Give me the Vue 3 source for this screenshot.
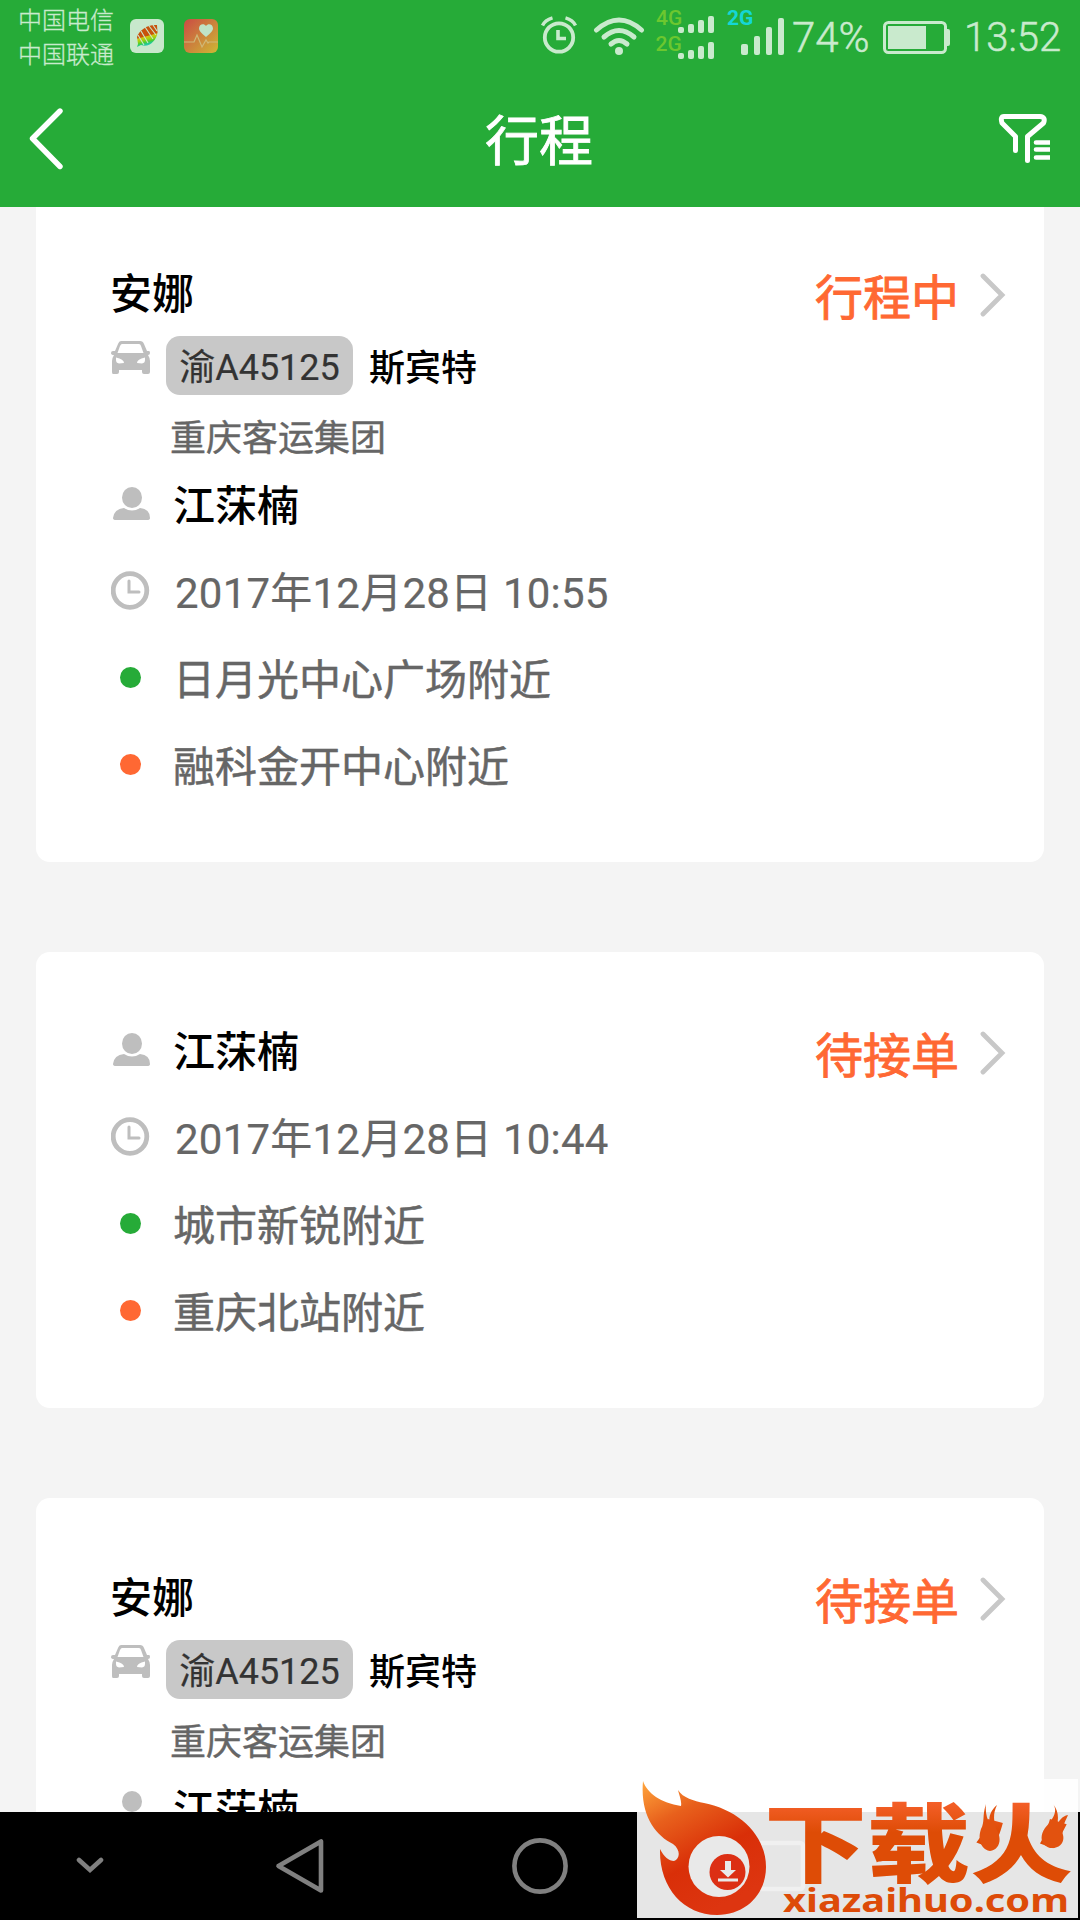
<script setup>
import { ref } from "vue";

const trips = ref([
  {
    id: 1,
    driver: "安娜",
    plate: "渝A45125",
    model: "斯宾特",
    company: "重庆客运集团",
    passenger: "江莯楠",
    time: "2017年12月28日 10:55",
    from: "日月光中心广场附近",
    to: "融科金开中心附近",
    status: "行程中",
  },
  {
    id: 2,
    passenger: "江莯楠",
    time: "2017年12月28日 10:44",
    from: "城市新锐附近",
    to: "重庆北站附近",
    status: "待接单",
  },
  {
    id: 3,
    driver: "安娜",
    plate: "渝A45125",
    model: "斯宾特",
    company: "重庆客运集团",
    passenger: "江莯楠",
    status: "待接单",
  },
]);
</script>

<template>
  <div class="screen">
    <header class="header">
      <div class="status-bar">
        <div class="carriers">
          <span>中国电信</span>
          <span>中国联通</span>
        </div>

        <svg class="app-icon" width="34" height="34" viewBox="0 0 34 34">
          <defs>
            <linearGradient id="leafFill" x1="0.3" y1="0" x2="0.55" y2="1">
              <stop offset="0.5" stop-color="#c8530c" />
              <stop offset="0.54" stop-color="#d2c80f" />
              <stop offset="0.66" stop-color="#9fd013" />
              <stop offset="0.76" stop-color="#4ccf30" />
              <stop offset="0.84" stop-color="#22c98a" />
              <stop offset="1" stop-color="#43c8d8" />
            </linearGradient>
          </defs>
          <rect width="34" height="34" rx="6" fill="#c8e8cc" />
          <path d="M27 6C18 5 9 11 7 18L8 25L7 28L11 26C19 29 26 22 27.500 14Z" fill="url(#leafFill)" />
          <path d="M8 16l6 10M11 12l7 12M15 8l8 12M19 7l7 9M23 6l4 6" stroke="#c8e8cc" stroke-width="1.1" />
        </svg>

        <svg class="app-icon second" width="34" height="34" viewBox="0 0 34 34">
          <defs>
            <linearGradient id="health" x1="0" y1="0" x2="1" y2="1">
              <stop offset="0" stop-color="#cb4b44" />
              <stop offset="1" stop-color="#cdb934" />
            </linearGradient>
          </defs>
          <rect width="34" height="34" rx="6" fill="url(#health)" />
          <path d="M22 18C17 14 15 11.500 15 9.500C15 5 20 4 22 7C24 4 29 5 29 9.500C29 11.500 27 14 22 18Z" fill="#bfe3c6" />
          <path d="M0 23H10L13 16L18 28L22 21L24 24L25 23H34" fill="none" stroke="#d0b878" stroke-width="1.200" />
        </svg>

        <svg class="alarm" width="38" height="38" viewBox="0 0 38 38" fill="none" stroke="#c9eacd">
          <circle cx="19" cy="21.500" r="14.200" stroke-width="3.800" />
          <path d="M18 14V22.500H26" stroke-width="3.600" />
          <path d="M2.500 9.500Q5 4 12.500 1.800M35.500 9.500Q33 4 25.500 1.800" stroke-width="3.400" />
        </svg>

        <svg class="wifi" width="52" height="40" viewBox="0 0 52 40" fill="none" stroke="#c9eacd" stroke-width="5" stroke-linecap="round">
          <path d="M3.500 13Q26-7 48.500 13" />
          <path d="M11 20Q26 7 41 20" />
          <path d="M18 27Q26 20 34 27" />
          <circle cx="26" cy="34" r="4" fill="#c9eacd" stroke="none" />
        </svg>

        <svg class="dual-signal" width="60" height="60" viewBox="0 0 60 60" fill="#c9eacd">
          <text x="0" y="19" class="net-text">4G</text>
          <text x="-0.500" y="45" class="net-text">2G</text>
          <rect x="22" y="21" width="6" height="6" rx="2" />
          <rect x="32" y="18" width="6" height="9" rx="2" />
          <rect x="42" y="14" width="6" height="13" rx="2" />
          <rect x="52" y="10" width="6" height="17" rx="2" />
          <rect x="22" y="47" width="6" height="6" rx="2" />
          <rect x="32" y="44" width="6" height="9" rx="2" />
          <rect x="42" y="40" width="6" height="13" rx="2" />
          <rect x="52" y="36" width="6" height="17" rx="2" />
        </svg>

        <svg class="signal" width="60" height="60" viewBox="0 0 60 60" fill="#c9eacd">
          <text x="0" y="19" class="net-text cyan">2G</text>
          <rect x="14" y="38" width="7" height="11" rx="2" />
          <rect x="27" y="30" width="6" height="19" rx="2" />
          <rect x="39" y="21" width="6" height="28" rx="2" />
          <rect x="51" y="12" width="6" height="37" rx="2" />
        </svg>

        <span class="percent">74%</span>

        <svg class="battery" width="68" height="34" viewBox="0 0 68 34">
          <rect x="1.500" y="1.500" width="61" height="30" rx="4" fill="none" stroke="#c9eacd" stroke-width="3" />
          <rect x="5" y="5" width="38" height="23" fill="#c9eacd" />
          <path d="M63 8H65Q67 8 67 10V23Q67 25 65 25H63Z" fill="#c9eacd" />
        </svg>

        <span class="clock">13:52</span>
      </div>

      <div class="title-bar">
        <svg class="back" width="34" height="62" viewBox="0 0 34 62">
          <path d="M31 3L3.500 30.500L31 58.500" fill="none" stroke="#fff" stroke-width="5.400" stroke-linecap="round" stroke-linejoin="round" />
        </svg>
        <h1>行程</h1>
        <svg class="filter" width="52" height="50" viewBox="0 0 52 50" fill="none" stroke="#fff" stroke-width="5" stroke-linecap="round" stroke-linejoin="round">
          <path d="M17.500 36.500V22.500L4 9Q2 2.500 6 2.500H42Q48 3 45.500 9L29.500 22.500V46.500" />
          <path d="M38 28.500H54M38 35.500H54M38 43.500H54" stroke-width="4.600" />
        </svg>
      </div>
    </header>

    <main class="list">
      <article v-for="trip in trips" :key="trip.id" class="card">
        <div class="info">
          <template v-if="trip.driver">
            <div class="driver">{{ trip.driver }}</div>
            <div class="vehicle">
              <div class="icon-col">
                <svg class="car" width="39" height="34" viewBox="0 0 39 34">
                  <path
                    fill="#bebebe"
                    fill-rule="evenodd"
                    d="M10 0H29Q32 0 33 3L36 10H38Q39 10 39 12Q39 14 37 14Q39 17 39 20V31Q39 33 37 33H33Q31 33 31 31V29H8V31Q8 33 6 33H2Q1 33 1 31V20Q1 17 3 14Q0 14 0 12Q0 10 2 10H4L7 3Q8 0 10 0ZM11 3Q10 3 9 5L6.500 12H32.500L30 5Q29.500 3 28 3ZM5 19Q5 22 8 22.500L13 22Q13 18 5 16.500ZM34 19Q34 22 31 22.500L26 22Q26 18 34 16.500Z"
                  />
                </svg>
              </div>
              <span class="plate">{{ trip.plate }}</span>
              <span class="model">{{ trip.model }}</span>
            </div>
            <div class="company">{{ trip.company }}</div>
          </template>

          <div class="row passenger">
            <div class="icon-col">
              <svg class="person" width="40" height="34" viewBox="0 0 40 34" fill="#bebebe">
                <ellipse cx="21" cy="10.500" rx="10" ry="10.500" />
                <path d="M13 21Q21 26 29 21Q39 22 39 31Q39 33 36 33H5Q2 33 2 31Q3 22 13 21Z" />
              </svg>
            </div>
            <span>{{ trip.passenger }}</span>
          </div>
          <div v-if="trip.time" class="row">
            <div class="icon-col">
              <svg class="time-icon" width="39" height="39" viewBox="0 0 39 39" fill="none" stroke="#bebebe">
                <circle cx="19" cy="19.500" r="16.800" stroke-width="4.800" />
                <path d="M18 10V21H28" stroke-width="3" stroke-linecap="round" />
              </svg>
            </div>
            <span class="time">{{ trip.time }}</span>
          </div>
          <div v-if="trip.from" class="row">
            <div class="icon-col"><i class="dot from"></i></div>
            <span>{{ trip.from }}</span>
          </div>
          <div v-if="trip.to" class="row">
            <div class="icon-col"><i class="dot to"></i></div>
            <span>{{ trip.to }}</span>
          </div>
        </div>

        <div class="status">
          <span>{{ trip.status }}</span>
          <svg width="26" height="44" viewBox="0 0 26 44">
            <path d="M3 3L22 22L3 41" fill="none" stroke="#c8c8c8" stroke-width="4.800" stroke-linecap="round" />
          </svg>
        </div>
      </article>
    </main>

    <nav class="nav-bar">
      <svg class="nav-down" width="28" height="18" viewBox="0 0 28 18">
        <path d="M3 3L14 13L25 3" fill="none" stroke="#808080" stroke-width="4.600" stroke-linecap="round" />
      </svg>
      <svg class="nav-back" width="50" height="56" viewBox="0 0 50 56">
        <path d="M46 3.500V52.500L3.500 28Z" fill="none" stroke="#808080" stroke-width="4.600" stroke-linejoin="round" />
      </svg>
      <svg class="nav-home" width="56" height="56" viewBox="0 0 56 56">
        <circle cx="28" cy="28" r="25.600" fill="none" stroke="#808080" stroke-width="4.600" />
      </svg>
    </nav>

    <svg class="watermark" width="441" height="139" viewBox="0 0 441 139">
      <defs>
        <linearGradient id="fire" x1="0" y1="0" x2="0.5" y2="1">
          <stop offset="0" stop-color="#ffa63c" />
          <stop offset="0.3" stop-color="#e8601c" />
          <stop offset="0.65" stop-color="#d92f08" />
          <stop offset="1" stop-color="#dd3510" />
        </linearGradient>
        <linearGradient id="word" x1="0" y1="0" x2="0" y2="1">
          <stop offset="0.2" stop-color="#f5602a" />
          <stop offset="0.45" stop-color="#de4c06" />
        </linearGradient>
      </defs>
      <rect width="441" height="139" fill="#fff" fill-opacity="0.9" />
      <rect x="120" y="64" width="46" height="46" rx="3" fill="none" stroke="#fff" stroke-opacity="0.4" stroke-width="4.600" />
      <path
        fill="url(#fire)"
        d="M6 2C10 14 24 24 44 27C45 22 42 16 41 11C46 19 57 22 67 24C102 31 129 56 129 88C129 115 109 136 80 136C46 136 22 108 23 70C27 78 32 82 37 82C43 80 44 71 36 65C18 56 3 36 6 2Z"
      />
      <circle cx="82" cy="87.500" r="30.500" fill="#e9e9e9" />
      <circle cx="90.500" cy="93" r="18" fill="#dc2f14" />
      <path d="M88 82H94V91H99L91 98.500L83 91H88ZM81 99.500H101V102.500H81Z" fill="#e9e9e9" />
      <text x="127" y="97" class="brand" textLength="309" lengthAdjust="spacingAndGlyphs">下载火</text>
      <!-- small flames above the side strokes of 火 -->
      <path
        fill="#e2520f"
        d="M349 25C345 37 348 43 344 50C340 62 345 71 353 72C361 71 365 63 361 53C357 46 355 36 360 26C354 31 351 38 353 45C350 40 348 33 349 25ZM416 25C422 33 414 42 408 49C402 58 404 66 413 69C422 70 428 64 426 56C424 50 428 43 431 36C425 37 422 42 420 46C422 38 421 31 416 25Z"
      />
      <text x="146" y="133" class="domain" textLength="286" lengthAdjust="spacingAndGlyphs">xiazaihuo.com</text>
    </svg>
  </div>
</template>

<style>
body {
  background: #f4f4f4;
}
</style>

<style scoped>
.screen {
  position: relative;
  width: 1080px;
  height: 1920px;
  display: flex;
  flex-direction: column;
  overflow: hidden;
  background: #f4f4f4;
  font-family: Roboto, "Noto Sans CJK SC", sans-serif;
}

.header {
  flex: none;
  height: 207px;
  background: #26ab38;
  z-index: 1;
}

.status-bar {
  display: flex;
  align-items: flex-start;
  height: 74px;
  color: #c9eacd;
}

.carriers {
  display: flex;
  flex-direction: column;
  box-sizing: border-box;
  width: 130px;
  padding: 4px 0 0 18px;
  font-size: 24px;
  font-weight: 300;
  line-height: 34px;
  white-space: nowrap;
  -webkit-text-stroke: 0.3px currentColor;
}

.app-icon {
  margin-top: 19px;
}

.app-icon.second {
  margin-left: 20px;
}

.alarm {
  margin: 16px 0 0 322px;
}

.wifi {
  margin: 17px 0 0 15px;
}

.dual-signal {
  margin: 6px 0 0 11px;
  overflow: visible;
}

.signal {
  margin: 6px 0 0 11px;
  overflow: visible;
}

.net-text {
  font-size: 21px;
  font-weight: 500;
  fill: #6cc72f;
}

.net-text.cyan {
  font-weight: 700;
  fill: #14d6d6;
}

.percent {
  width: 91px;
  margin-left: 5px;
  font-size: 42px;
  font-weight: 300;
  line-height: 76px;
  -webkit-text-stroke: 0.5px currentColor;
}

.battery {
  margin-top: 21px;
}

.clock {
  margin-left: 13px;
  font-size: 40px;
  font-weight: 300;
  line-height: 76px;
  -webkit-text-stroke: 0.5px currentColor;
}

.title-bar {
  display: flex;
  align-items: flex-start;
  justify-content: space-between;
  height: 133px;
  padding: 0 30px 0 29px;
}

.back {
  margin-top: 34px;
}

.title-bar h1 {
  margin: 28px 0 0 17px;
  color: #fff;
  font-size: 54px;
  font-weight: 400;
  line-height: 82px;
  -webkit-text-stroke: 0.8px currentColor;
}

.filter {
  margin-top: 40px;
  overflow: hidden;
}

.list {
  flex: 1;
  min-height: 0;
  display: flex;
  flex-direction: column;
  gap: 90px;
  /* list is scrolled slightly under the header */
  margin-top: -13px;
  padding: 0 36px;
  overflow: hidden;
}

.card {
  flex: none;
  display: flex;
  justify-content: space-between;
  align-items: flex-start;
  box-sizing: border-box;
  padding: 57px 37px 51px 75px;
  border-radius: 14px;
  background: #fff;
}

.driver {
  height: 85px;
  margin-left: -1px;
  line-height: 88px;
  font-size: 42px;
  font-weight: 500;
  color: #000;
}

.vehicle {
  display: flex;
  height: 59px;
}

.icon-col {
  flex: none;
  width: 62px;
  display: flex;
}

.vehicle .icon-col {
  width: 55px;
}

.car {
  margin-top: 5px;
}

.plate {
  width: 187px;
  border-radius: 14px;
  background: #c8c8c8;
  color: #333;
  font-size: 36px;
  line-height: 64px;
  text-align: center;
  -webkit-text-stroke: 0.2px currentColor;
}

.model {
  margin-left: 16px;
  color: #000;
  font-size: 36px;
  font-weight: 500;
  line-height: 67px;
}

.company {
  height: 51px;
  padding: 17px 0 0 59px;
  color: #666;
  font-size: 36px;
  line-height: 55px;
  -webkit-text-stroke: 0.4px currentColor;
}

.row {
  display: flex;
  align-items: center;
  height: 87px;
  color: #666;
  font-size: 42px;
  line-height: 87px;
  -webkit-text-stroke: 0.5px currentColor;
}

.passenger {
  color: #000;
  font-weight: 500;
  -webkit-text-stroke: 0;
}

.person {
  margin-top: -6px;
}

.time-icon {
  margin-top: -6px;
}

.time {
  margin-left: 2px;
  letter-spacing: 0.22px;
  -webkit-text-stroke: 0.2px currentColor;
}

.dot {
  width: 21px;
  height: 21px;
  margin: -6px 0 0 9px;
  border-radius: 50%;
}

.dot.from {
  background: #26ab38;
}

.dot.to {
  background: #ff6833;
}

.status {
  display: flex;
  align-items: center;
  gap: 21px;
  padding-top: 4px;
  color: #ff6833;
  font-size: 48px;
  line-height: 88px;
  -webkit-text-stroke: 0.9px currentColor;
}

.status svg {
  margin: -8px 1px 0 0;
}

.nav-bar {
  flex: none;
  display: flex;
  align-items: center;
  height: 108px;
  box-sizing: border-box;
  padding-left: 76px;
  background: #000;
}

.nav-back {
  margin-left: 171px;
}

.nav-home {
  margin-left: 187px;
}

.watermark {
  position: absolute;
  left: 637px;
  top: 1779px;
}

.brand {
  font-family: "Noto Sans CJK SC", sans-serif;
  font-size: 86px;
  font-weight: 900;
  fill: url(#word);
}

.domain {
  font-family: "Noto Sans", sans-serif;
  font-size: 32px;
  font-weight: 700;
  fill: #dd4b08;
}
</style>
